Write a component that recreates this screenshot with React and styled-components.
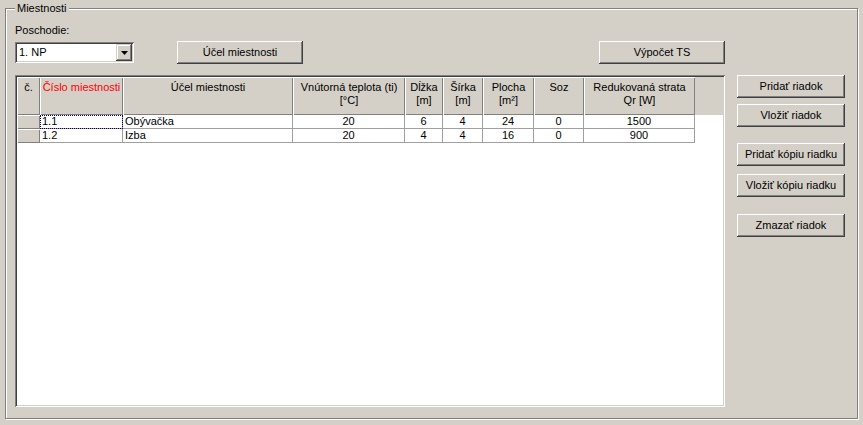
import React from 'react';
import styled, { createGlobalStyle } from 'styled-components';

const GlobalStyle = createGlobalStyle`
  html, body {
    margin: 0;
    padding: 0;
    background: #d4d0c8;
  }
  body {
    font-family: "Liberation Sans", Arial, sans-serif;
    font-size: 11px;
    color: #000;
  }
`;

const Window = styled.div`
  width: 863px;
  height: 425px;
  padding: 8px 0 0 5px;
  box-sizing: border-box;
`;

const GroupBox = styled.div`
  position: relative;
  width: 853px;
  height: 411px;
  box-sizing: border-box;
  border: 1px solid #808080;
  box-shadow: inset 1px 1px 0 #fff, 1px 1px 0 #fff;
  padding: 15px 0 0 9px;
  display: flex;
  align-items: flex-start;
`;

const Legend = styled.div`
  position: absolute;
  top: -7px;
  left: 9px;
  padding: 0 2px;
  line-height: 13px;
  background: #d4d0c8;
`;

const LeftColumn = styled.div`
  width: 710px;
  display: flex;
  flex-direction: column;
`;

const Label = styled.div`
  line-height: 13px;
  height: 13px;
`;

const Toolbar = styled.div`
  margin-top: 4px;
  height: 23px;
  display: flex;
  align-items: flex-start;
`;

const Combo = styled.div`
  margin-top: 1px;
  width: 119px;
  height: 21px;
  box-sizing: border-box;
  background: #fff;
  box-shadow: inset 1px 1px #808080, inset -1px -1px #fff, inset 2px 2px #404040, inset -2px -2px #d4d0c8;
  padding: 2px;
  display: flex;
  align-items: center;
`;

const ComboText = styled.span`
  flex: 1;
  padding-left: 2px;
  line-height: 13px;
`;

const ComboArrow = styled.div`
  width: 16px;
  height: 17px;
  box-sizing: border-box;
  background: #d4d0c8;
  box-shadow: inset -1px -1px #404040, inset 1px 1px #d4d0c8, inset -2px -2px #808080, inset 2px 2px #fff;
  display: flex;
  align-items: center;
  justify-content: center;
`;

const Button = styled.div`
  width: ${p => p.$w || 126}px;
  height: 23px;
  box-sizing: border-box;
  margin-left: ${p => p.$ml || '0px'};
  margin-top: ${p => p.$mt || 0}px;
  background: #d4d0c8;
  box-shadow: inset -1px -1px #404040, inset 1px 1px #fff, inset -2px -2px #808080, inset 2px 2px #d4d0c8;
  display: flex;
  align-items: center;
  justify-content: center;
  line-height: 13px;
  padding-bottom: 1px;
`;

const Grid = styled.div`
  margin-top: 11px;
  width: 710px;
  height: 332px;
  box-sizing: border-box;
  padding: 2px;
  background: #fff;
  box-shadow: inset 1px 1px #808080, inset -1px -1px #fff, inset 2px 2px #404040, inset -2px -2px #d4d0c8;
  display: flex;
  flex-direction: column;
`;

const HeaderRow = styled.div`
  display: flex;
  height: 38px;
  background: #d4d0c8;
`;

const HeaderCell = styled.div`
  width: ${p => p.$w}px;
  box-sizing: border-box;
  box-shadow: inset 1px 1px #fff, inset -1px -1px #808080;
  padding-top: 4px;
  text-align: center;
  line-height: 13px;
  white-space: nowrap;
  color: ${p => (p.$red ? '#ff0000' : '#000')};
`;

const HeaderFill = styled.div`
  flex: 1;
`;

const Row = styled.div`
  display: flex;
  height: 14px;
`;

const RowHead = styled.div`
  width: 23px;
  box-sizing: border-box;
  background: #d4d0c8;
  box-shadow: inset 1px 1px #fff, inset -1px -1px #808080;
`;

const Cell = styled.div`
  width: ${p => p.$w}px;
  box-sizing: border-box;
  border-right: 1px solid #a0a0a0;
  border-bottom: 1px solid #a0a0a0;
  padding: 0 2px;
  line-height: 13px;
  text-align: ${p => p.$align || 'center'};
  white-space: nowrap;
  overflow: hidden;
  ${p => p.$focus && `outline: 1px dotted #000060; outline-offset: -1px;`}
`;

const RightColumn = styled.div`
  margin-left: 12px;
  margin-top: 51px;
  display: flex;
  flex-direction: column;
`;

const columns = [
  { w: 23, title: ['č.'] },
  { w: 83, title: ['Číslo miestnosti'], red: true, align: 'left' },
  { w: 170, title: ['Účel miestnosti'], align: 'left' },
  { w: 112, title: ['Vnútorná teplota (ti)', '[°C]'] },
  { w: 38, title: ['Dĺžka', '[m]'] },
  { w: 40, title: ['Šírka', '[m]'] },
  { w: 51, title: ['Plocha', '[m²]'] },
  { w: 50, title: ['Soz'] },
  { w: 111, title: ['Redukovaná strata', 'Qr [W]'] },
];

const rows = [
  ['1.1', 'Obývačka', '20', '6', '4', '24', '0', '1500'],
  ['1.2', 'Izba', '20', '4', '4', '16', '0', '900'],
];

const sideButtons = [
  { label: 'Pridať riadok', mt: 0 },
  { label: 'Vložiť riadok', mt: 6 },
  { label: 'Pridať kópiu riadku', mt: 16 },
  { label: 'Vložiť kópiu riadku', mt: 8 },
  { label: 'Zmazať riadok', mt: 17 },
];

export default function App() {
  return (
    <Window>
      <GlobalStyle />
      <GroupBox>
        <Legend>Miestnosti</Legend>
        <LeftColumn>
          <Label>Poschodie:</Label>
          <Toolbar>
            <Combo>
              <ComboText>1. NP</ComboText>
              <ComboArrow>
                <svg width="7" height="4" viewBox="0 0 7 4">
                  <path d="M0 0h7L3.5 4z" fill="#000" />
                </svg>
              </ComboArrow>
            </Combo>
            <Button $ml="43px">Účel miestnosti</Button>
            <Button $ml="auto">Výpočet TS</Button>
          </Toolbar>
          <Grid>
            <HeaderRow>
              {columns.map((c, i) => (
                <HeaderCell key={i} $w={c.w} $red={c.red}>
                  {c.title.map((t, k) => <div key={k}>{t}</div>)}
                </HeaderCell>
              ))}
              <HeaderFill />
            </HeaderRow>
            {rows.map((r, i) => (
              <Row key={i}>
                <RowHead />
                {r.map((v, k) => (
                  <Cell
                    key={k}
                    $w={columns[k + 1].w}
                    $align={columns[k + 1].align}
                    $focus={i === 0 && k === 0}
                  >
                    {v}
                  </Cell>
                ))}
              </Row>
            ))}
          </Grid>
        </LeftColumn>
        <RightColumn>
          {sideButtons.map((b, i) => (
            <Button key={i} $w={108} $mt={b.mt}>{b.label}</Button>
          ))}
        </RightColumn>
      </GroupBox>
    </Window>
  );
}
